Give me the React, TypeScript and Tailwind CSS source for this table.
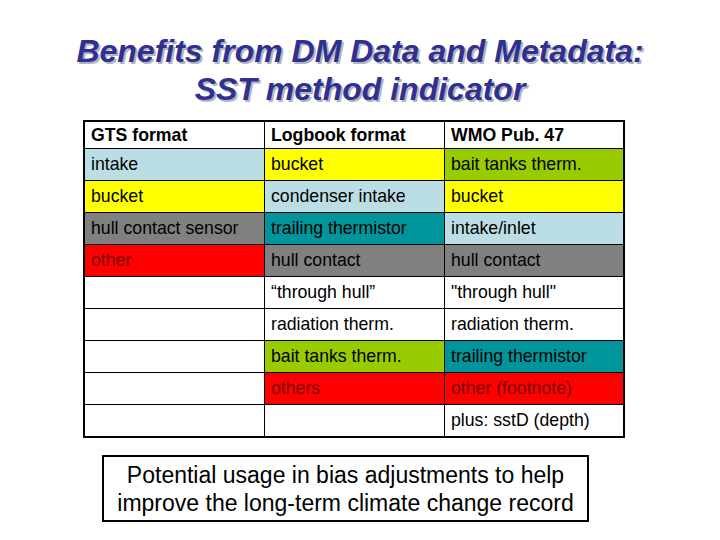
const BLUE = 'bg-[#bbdee4]';
const YELLOW = 'bg-[#ffff00]';
const GRAY = 'bg-[#808080]';
const RED = 'bg-[#ff0000] text-[#7a0000]';
const TEAL = 'bg-[#00959b]';
const GREEN = 'bg-[#99cc00]';

type Cell = { text: string; color?: string };

const rows: Cell[][] = [
  [{ text: 'intake', color: BLUE }, { text: 'bucket', color: YELLOW }, { text: 'bait tanks therm.', color: GREEN }],
  [{ text: 'bucket', color: YELLOW }, { text: 'condenser intake', color: BLUE }, { text: 'bucket', color: YELLOW }],
  [{ text: 'hull contact sensor', color: GRAY }, { text: 'trailing thermistor', color: TEAL }, { text: 'intake/inlet', color: BLUE }],
  [{ text: 'other', color: RED }, { text: 'hull contact', color: GRAY }, { text: 'hull contact', color: GRAY }],
  [{ text: '' }, { text: '\u201cthrough hull\u201d' }, { text: '"through hull"' }],
  [{ text: '' }, { text: 'radiation therm.' }, { text: 'radiation therm.' }],
  [{ text: '' }, { text: 'bait tanks therm.', color: GREEN }, { text: 'trailing thermistor', color: TEAL }],
  [{ text: '' }, { text: 'others', color: RED }, { text: 'other (footnote)', color: RED }],
  [{ text: '' }, { text: '' }, { text: 'plus: sstD (depth)' }],
];

const widths = ['w-[179px]', 'w-[180px] border-l border-black', 'flex-1 border-l border-black'];

export default function App() {
  return (
    <div className="w-[720px] h-[540px] bg-white overflow-hidden font-['Liberation_Sans',Arial,sans-serif] text-black">
      {/* Title */}
      <h1 className="pt-[32px] text-center text-[32px] leading-[38px] font-bold italic text-[#2e3192] [text-shadow:2px_2px_0_#b4b4bc]">
        Benefits from DM Data and Metadata:
        <br />
        SST method indicator
      </h1>

      {/* Table */}
      <div className="mt-[12px] ml-[83px] w-[542px] border-2 border-black text-[17.7px]">
        <div className="flex h-[26px] font-bold">
          {['GTS format', 'Logbook format', 'WMO Pub. 47'].map((h, i) => (
            <div key={h} className={`${widths[i]} flex items-center pl-[6px]`}>
              {h}
            </div>
          ))}
        </div>
        {rows.map((row, r) => (
          <div key={r} className="flex h-[32px] border-t border-black">
            {row.map((c, i) => (
              <div key={i} className={`${widths[i]} ${c.color ?? 'bg-white'} flex items-center pl-[6px] pb-[1px]`}>
                {c.text}
              </div>
            ))}
          </div>
        ))}
      </div>

      {/* Note box */}
      <div className="mt-[17px] ml-[102px] w-[487px] h-[67px] border-2 border-black flex flex-col items-center justify-center text-[23px] leading-[28px]">
        <span>Potential usage in bias adjustments to help</span>
        <span>improve the long-term climate change record</span>
      </div>
    </div>
  );
}
